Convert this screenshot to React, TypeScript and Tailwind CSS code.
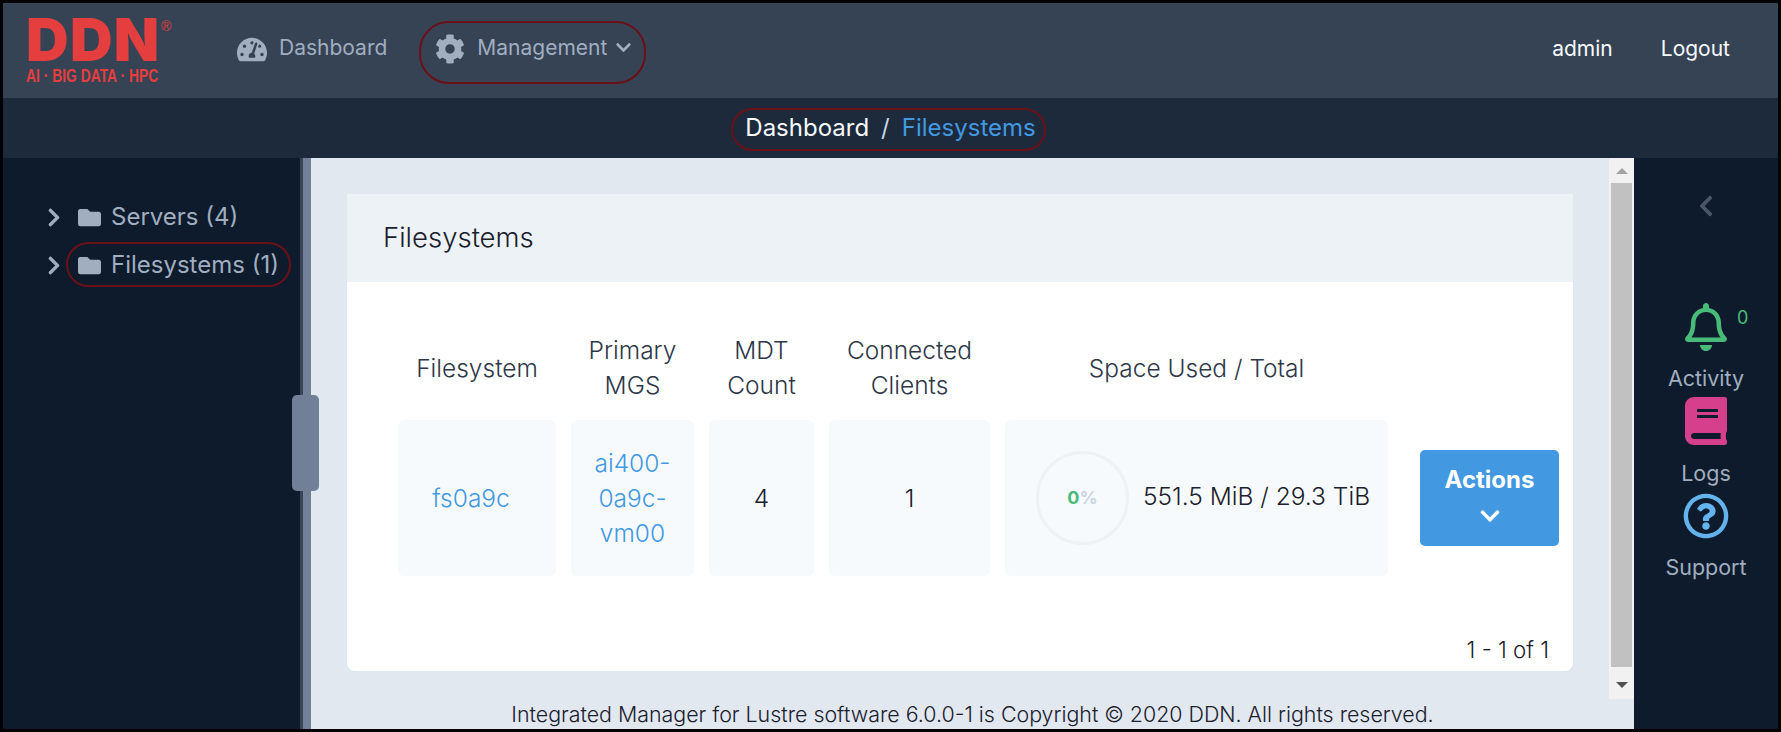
import React from 'react';
import {
  FaTachometerAlt,
  FaCog,
  FaChevronDown,
  FaChevronRight,
  FaChevronLeft,
  FaFolder,
  FaRegBell,
  FaBook,
  FaRegQuestionCircle,
} from 'react-icons/fa';

const font = { fontFamily: 'Inter, "Noto Sans", sans-serif' };

// red hand-drawn style markers from the annotated screenshot
const Marker: React.FC<{ className: string }> = ({ className }) => (
  <span className={`absolute border-2 border-[#6b1018] pointer-events-none ${className}`} />
);

const Logo = () => (
  <div className="w-[134px] ml-[23px] mt-[13px] relative text-[#e53e3e] select-none">
    <div className="text-[59px] leading-[48px] font-black tracking-[1.3px] font-['Inter'] whitespace-nowrap">DDN</div>
    <span className="absolute left-[135px] top-[3px] text-[14px] leading-none font-['Liberation_Sans']">®</span>
    <div className="mt-[3px] text-[18px] leading-[18px] font-bold font-['Liberation_Sans'] whitespace-nowrap origin-left scale-x-[0.77]">
      AI · BIG DATA · HPC
    </div>
  </div>
);

const Header = () => (
  <div className="h-[95px] bg-[#364354] flex items-start relative shrink-0">
    <Logo />
    <div className="flex items-center ml-[77px] mt-[31px] text-[#a0aec0] text-[21px] leading-[24px]">
      <FaTachometerAlt className="w-[30px] h-[27px] mr-[12px]" />
      <span className="-mt-[2px]">Dashboard</span>
      <FaCog className="w-[30px] h-[30px] ml-[48px] mr-[12px]" />
      <span className="-mt-[2px]">Management</span>
      <FaChevronDown className="w-[17px] h-[17px] ml-[8px] -mt-[3px]" />
    </div>
    <div className="ml-auto mt-[34px] mr-[48px] flex text-[#f7fafc] text-[21px] leading-[24px] gap-[48px]">
      <span>admin</span>
      <span>Logout</span>
    </div>
    <Marker className="left-[416px] top-[18px] w-[227px] h-[63px] rounded-[30px]" />
  </div>
);

const Breadcrumb = () => (
  <div className="h-[60px] bg-[#1c2a3c] flex items-center justify-center relative shrink-0 text-[24px] leading-[30px]">
    <span className="text-[#f7fafc]">Dashboard</span>
    <span className="text-[#cbd5e0] mx-[12px]">/</span>
    <span className="text-[#4299e1]">Filesystems</span>
    <Marker className="left-[728px] top-[10px] w-[315px] h-[43px] rounded-[22px]" />
  </div>
);

const TreeItem: React.FC<{ label: string; circled?: boolean }> = ({ label, circled }) => (
  <div className="flex items-center h-[48px] relative text-[#a0aec0] text-[24px] pl-[43px]">
    <FaChevronRight className="w-[16px] h-[21px]" />
    <FaFolder className="w-[25px] h-[23px] ml-[15px] mr-[9px]" />
    <span className="whitespace-nowrap">{label}</span>
    {circled && <Marker className="left-[63px] top-[1px] w-[225px] h-[45px] rounded-[23px]" />}
  </div>
);

const Sidebar = () => (
  <div className="w-[297px] bg-[#0e1b2c] pt-[35px] shrink-0">
    <TreeItem label="Servers (4)" />
    <TreeItem label="Filesystems (1)" circled />
  </div>
);

const Splitter = () => (
  <div className="w-[11px] flex shrink-0 relative z-10">
    <div className="w-[3px] bg-[#3a4556]" />
    <div className="flex-1 bg-[#718096]" />
    <div className="absolute left-[-8px] top-[237px] w-[27px] h-[96px] rounded-[5px] bg-[#718096]" />
  </div>
);

const HeadCell: React.FC<{ children: React.ReactNode }> = ({ children }) => (
  <div className="flex items-center justify-center text-center text-[#2d3748]">{children}</div>
);

const BodyCell: React.FC<{ children: React.ReactNode; className?: string }> = ({ children, className }) => (
  <div className={`flex items-center justify-center text-center bg-[#f7fafc] rounded-[6px] h-[156px] ${className || ''}`}>
    {children}
  </div>
);

const Gauge = () => (
  <div className="w-[93px] h-[94px] rounded-full border-[3px] border-[#edf2f7] flex items-center justify-center shrink-0 text-[18px] leading-[24px] font-bold">
    <span className="text-[#48bb78]">0</span>
    <span className="text-[#cbd5e0]">%</span>
  </div>
);

const FilesystemCard = () => (
  <div className="mx-[36px] mt-[36px] h-[477px] bg-white rounded-b-[8px] overflow-hidden flex flex-col">
    <div className="h-[88px] bg-[#edf2f7] flex items-center pl-[36px] text-[27.5px] font-light text-[#1a202c] shrink-0">
      Filesystems
    </div>
    <div className="pl-[51px] pt-[51px] flex-1 flex flex-col text-[24.5px] font-light leading-[35px]">
      <div className="grid grid-cols-[158px_123px_105px_161px_383px_139px] gap-x-[15px]">
        <HeadCell>Filesystem</HeadCell>
        <HeadCell>
          Primary
          <br />
          MGS
        </HeadCell>
        <HeadCell>
          MDT
          <br />
          Count
        </HeadCell>
        <HeadCell>
          Connected
          <br />
          Clients
        </HeadCell>
        <HeadCell>Space Used / Total</HeadCell>
        <div />
      </div>
      <div className="grid grid-cols-[158px_123px_105px_161px_383px_139px] gap-x-[15px] mt-[17px]">
        <BodyCell className="text-[#4299e1] pr-[12px]">fs0a9c</BodyCell>
        <BodyCell className="text-[#4299e1]">
          ai400-
          <br />
          0a9c-
          <br />
          vm00
        </BodyCell>
        <BodyCell className="text-[#1a202c]">4</BodyCell>
        <BodyCell className="text-[#1a202c]">1</BodyCell>
        <BodyCell className="justify-start pl-[31px] text-[#1a202c]">
          <Gauge />
          <span className="ml-[14px] mb-[4px] whitespace-nowrap">551.5 MiB / 29.3 TiB</span>
        </BodyCell>
        <div className="flex items-center">
          <button className="ml-[17px] w-[139px] h-[96px] shrink-0 rounded-[5px] bg-[#4299e1] text-white font-bold text-[24px] leading-[30px] flex flex-col items-center pt-[15px]">
            Actions
            <FaChevronDown className="w-[22px] h-[22px] mt-[10px]" />
          </button>
        </div>
      </div>
      <div className="mt-auto mb-[4px] mr-[24px] text-right text-[#1a202c] text-[22.3px]">1 - 1 of 1</div>
    </div>
  </div>
);

const Scrollbar = () => (
  <div className="w-[25px] bg-[#f1f1f1] flex flex-col items-center shrink-0">
    <div className="h-[25px] flex items-center justify-center">
      <div className="w-0 h-0 border-x-[6px] border-x-transparent border-b-[6px] border-b-[#a3a3a3]" />
    </div>
    <div className="w-[21px] h-[484px] bg-[#c1c1c1]" />
    <div className="flex-1 flex items-start justify-center pt-[15px]">
      <div className="w-0 h-0 border-x-[6px] border-x-transparent border-t-[6px] border-t-[#505050]" />
    </div>
  </div>
);

const Content = () => (
  <div className="flex-1 min-w-0 bg-[#e2e8f0] flex flex-col">
    <div className="h-[541px] flex shrink-0">
      <div className="flex-1 min-w-0">
        <FilesystemCard />
      </div>
      <Scrollbar />
    </div>
    <div className="flex-1 flex items-center justify-center text-[21.4px] font-light leading-[26px] text-[#1a202c]">
      Integrated Manager for Lustre software 6.0.0-1 is Copyright © 2020 DDN. All rights reserved.
    </div>
  </div>
);

const RightPanel = () => (
  <div className="w-[144px] bg-[#0e1b2c] shrink-0 flex flex-col items-center pt-[36px] text-[#a0aec0] text-[21.5px] leading-[28px]">
    <FaChevronLeft className="w-[16px] h-[24px] text-[#4a5568]" />
    <div className="relative mt-[85px]">
      <FaRegBell className="w-[42px] h-[48px] text-[#48bb78]" />
      <span className="absolute left-[52px] top-[1px] text-[18px] leading-[28px] text-[#48bb78]">0</span>
    </div>
    <span className="mt-[13px]">Activity</span>
    <FaBook className="w-[42px] h-[48px] text-[#d53f8c] mt-[5px]" />
    <span className="mt-[14px]">Logs</span>
    <FaRegQuestionCircle className="w-[46px] h-[46px] text-[#63b3ed] mt-[6px]" />
    <span className="mt-[14px]">Support</span>
  </div>
);

export default function App() {
  return (
    <div className="w-[1781px] h-[732px] bg-black p-[3px] overflow-hidden" style={font}>
      <div className="w-full h-full flex flex-col overflow-hidden">
        <Header />
        <Breadcrumb />
        <div className="flex-1 min-h-0 flex">
          <Sidebar />
          <Splitter />
          <Content />
          <RightPanel />
        </div>
      </div>
    </div>
  );
}
